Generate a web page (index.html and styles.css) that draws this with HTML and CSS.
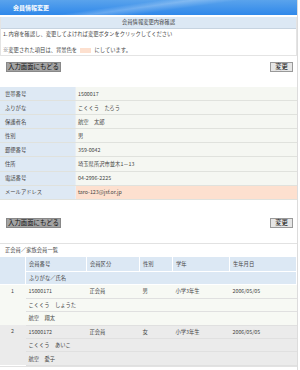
FILE: index.html
```html
<!DOCTYPE html>
<html lang="ja">
<head>
    <meta charset="UTF-8">
    <title>会員情報変更</title>
    <link rel="stylesheet" href="styles.css">
</head>
<body>
    <div id="page">
        <header class="titlebar">会員情報変更</header>
        <div class="confirm">
            <div class="subtitle">会員情報変更内容確認</div>
            <p class="note">1. 内容を確認し、変更してよければ変更ボタンをクリックしてください</p>
            <p class="note second">※変更された項目は、背景色を <span class="swatch"></span> にしています。</p>
        </div>

        <div class="actions">
            <button class="btn back">入力画面にもどる</button>
            <button class="btn submit">変更</button>
        </div>

        <table class="detail">
            <tr><th>世帯番号</th><td>1500017</td></tr>
            <tr><th>ふりがな</th><td>こくくう　たろう</td></tr>
            <tr><th>保護者名</th><td>航空　太郎</td></tr>
            <tr><th>性別</th><td>男</td></tr>
            <tr><th>郵便番号</th><td>359-0042</td></tr>
            <tr><th>住所</th><td>埼玉県所沢市並木1－13</td></tr>
            <tr><th>電話番号</th><td>04-2996-2225</td></tr>
            <tr class="changed"><th>メールアドレス</th><td>taro-123@jsf.or.jp</td></tr>
        </table>

        <div class="actions second">
            <button class="btn back">入力画面にもどる</button>
            <button class="btn submit">変更</button>
        </div>

        <div class="members">
            <div class="caption">正会員／家族会員一覧</div>
            <table class="list">
                <tr class="head first">
                    <td class="idx" rowspan="2"></td><td class="c-no">会員番号</td><td class="c-kind">会員区分</td><td class="c-sex">性別</td><td class="c-grade">学年</td><td>生年月日</td>
                </tr>
                <tr class="head">
                    <td colspan="5">ふりがな／氏名</td>
                </tr>
                <tr class="odd">
                    <td class="idx" rowspan="3">1</td><td>15000171</td><td>正会員</td><td>男</td><td>小学3年生</td><td>2006/05/05</td>
                </tr>
                <tr class="odd"><td colspan="5">こくくう　しょうた</td></tr>
                <tr class="odd"><td colspan="5">航空　翔太</td></tr>
                <tr class="even">
                    <td class="idx" rowspan="3">2</td><td>15000172</td><td>正会員</td><td>女</td><td>小学3年生</td><td>2006/05/05</td>
                </tr>
                <tr class="even"><td colspan="5">こくくう　あいこ</td></tr>
                <tr class="even"><td colspan="5">航空　愛子</td></tr>
            </table>
        </div>
    </div>
</body>
</html>
```

FILE: styles.css
```css
html,
body {
    margin: 0;
    padding: 0;
    background: #fff;
    font-family: "Noto Sans CJK JP", "Noto Sans", sans-serif;
    font-size: 5.3px;
    color: #444;
}

#page {
    width: 297px;
    border-right: 1px solid #dcdcdc;
    min-height: 370px;
}

.titlebar {
    height: 15px;
    line-height: 15px;
    padding-left: 13px;
    color: #fff;
    font-size: 6px;
    font-weight: bold;
    background:
        linear-gradient(172deg, rgba(255, 255, 255, 0) 40%, rgba(255, 255, 255, .25) 48%, rgba(255, 255, 255, 0) 60%),
        linear-gradient(to bottom, #5aa3ec, #2f88ea);
}

.confirm {
    border: 1px solid #e4e4e4;
    border-top: 0;
    margin-top: 2px;
}

.subtitle {
    height: 11px;
    line-height: 11px;
    text-align: center;
    background: #dce8f4;
    border-bottom: 1px solid #c6d3e0;
}

.note {
    margin: 0;
    padding: 0 2px;
    height: 10px;
    line-height: 10px;
}

.note.second {
    margin-top: 6px;
}

.swatch {
    display: inline-block;
    width: 11px;
    height: 5px;
    background: #fde0cf;
    vertical-align: middle;
    margin: 0 2px;
}

.actions {
    display: flex;
    justify-content: space-between;
    align-items: flex-start;
    padding: 6px 4px 0 6px;
    height: 25px;
}

.actions.second {
    padding-top: 18px;
    height: 25px;
}

.btn {
    font-family: inherit;
    font-size: 6.4px;
    margin: 0;
    padding: 0 1px;
    height: 10px;
    line-height: 8px;
    border: 1px solid #888;
    border-radius: 0;
    color: #111;
}

.back {
    background: #a3a3a3;
}

.submit {
    background: #e6e6e6;
    border-color: #999;
    padding: 0 4px;
}

table {
    border-collapse: collapse;
    width: 297px;
}

.detail th,
.detail td {
    height: 13.1px;
    padding: 0 0 0 5px;
    text-align: left;
    font-weight: normal;
    border-bottom: 1px solid #e0e2dd;
}

.detail th {
    width: 70px;
    background: #dee9f4;
    border-right: 1px solid #e8eef4;
}

.detail td {
    padding-left: 2px;
    background: #f5f7f2;
}

.detail .changed td {
    background: #fde0cf;
}

.members {
    border: 1px solid #e2e2e2;
    border-left: 0;
    border-right: 0;
}

.caption {
    height: 13px;
    line-height: 13px;
    padding-left: 5px;
}

.list td {
    height: 12.45px;
    padding: 0 0 0 3px;
    border-bottom: 1px solid #e0e0e0;
}

.list .idx {
    width: 14px;
    padding: 0 0 0 11px;
    vertical-align: top;
    line-height: 13.45px;
    border-bottom: 0;
}

.list .c-no { width: 57px; }
.list .c-kind { width: 49px; }
.list .c-sex { width: 29px; }
.list .c-grade { width: 53px; }

.list .head td {
    background: #dce8f4;
    border: 1px solid #fff;
    border-top: 0;
    border-left: 0;
}

.list .head.first td {
    height: 14px;
}

.list .odd td {
    background: #f7f9f4;
}

.list .even td {
    background: #ebebeb;
}
```
